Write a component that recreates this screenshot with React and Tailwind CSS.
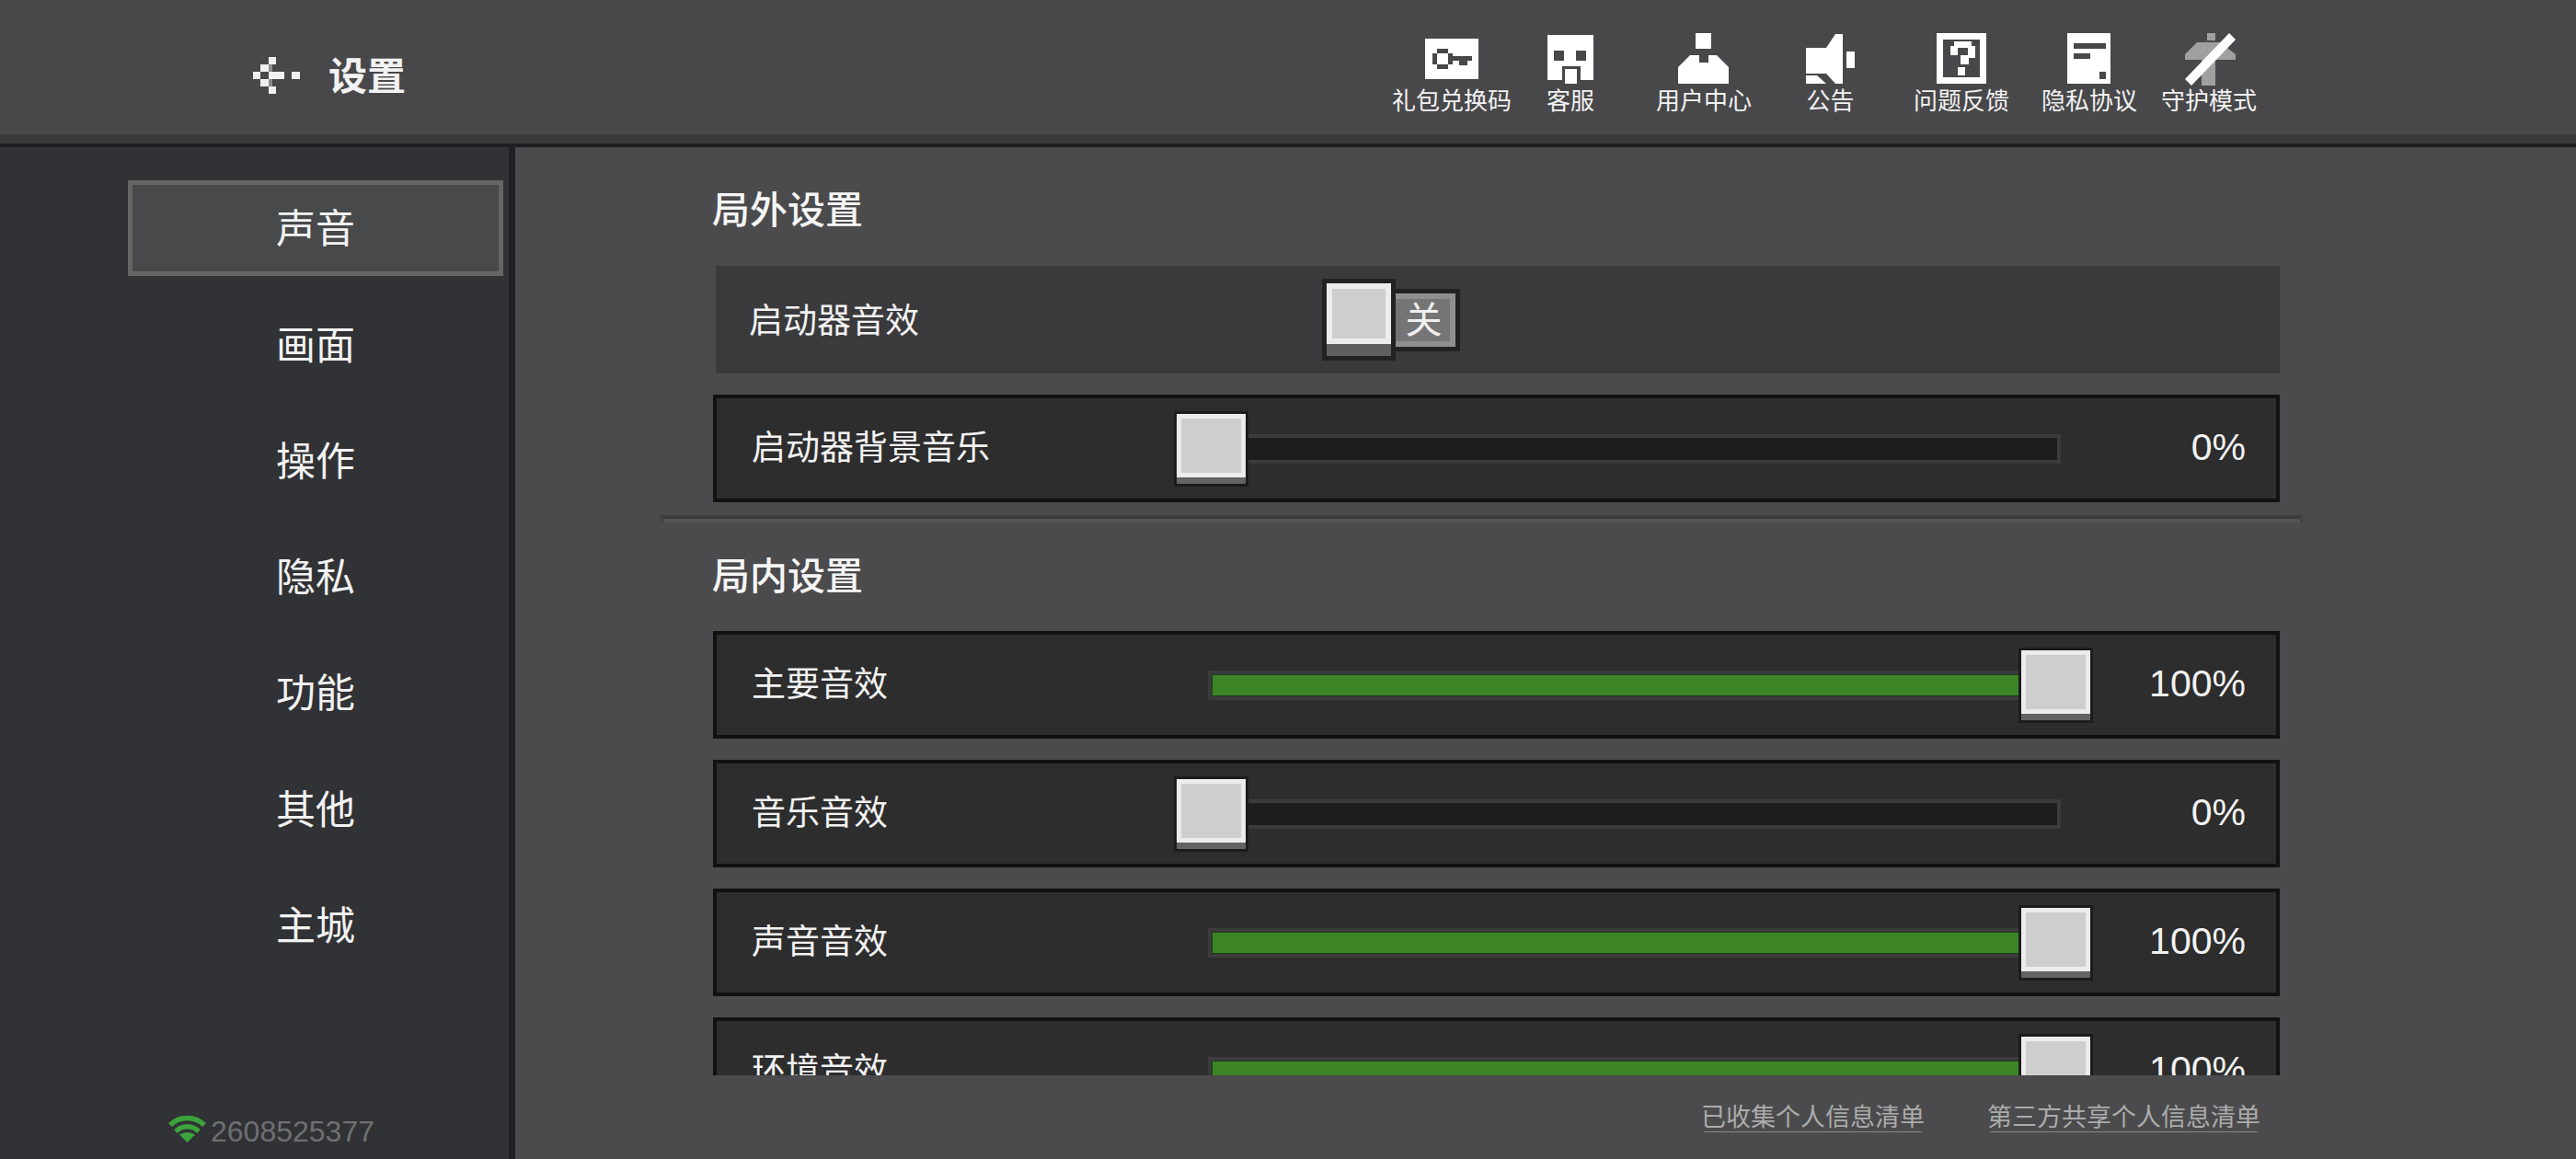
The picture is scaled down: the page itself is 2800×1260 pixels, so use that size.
const FONT = "font-['Liberation_Sans','Noto_Sans_CJK_SC',sans-serif]";

const KeyIcon = () => (
  <svg viewBox="0 0 58 55" className="w-[58px] h-[55px] shrink-0">
    <rect x="0" y="6" width="58" height="44" fill="#fff" />
    <path d="M13 17h12v5h5v3h21v5h-5v5h-9v-5h-7v4h-5v5H13v-5H8V22h5zM13 22v12h12V22z" fill="#48484a" fillRule="evenodd" />
  </svg>
);

const GhostIcon = () => (
  <svg viewBox="0 0 50 55" className="w-[50px] h-[55px] shrink-0">
    <rect x="0" y="2" width="50" height="49" fill="#fff" />
    <rect x="7" y="19" width="11" height="11" fill="#48484a" />
    <rect x="31" y="19" width="11" height="11" fill="#48484a" />
    <rect x="16" y="36" width="20" height="19" fill="#48484a" />
    <rect x="19" y="39" width="13" height="16" fill="#fff" />
  </svg>
);

const UserIcon = () => (
  <svg viewBox="0 0 55 55" className="w-[55px] h-[55px] shrink-0">
    <rect x="19" y="0" width="17" height="17" fill="#fff" />
    <path d="M13 24h10v8h10v-8h9l13 13v18H0V37z" fill="#fff" />
  </svg>
);

const SpeakerIcon = () => (
  <svg viewBox="0 0 53 55" className="w-[53px] h-[55px] shrink-0">
    <path d="M0 16h22L32 1h8v54h-8L22 44H0z" fill="#fff" />
    <path d="M0 46h12l10 9H0z" fill="#fff" />
    <rect x="44" y="20" width="9" height="18" fill="#fff" />
  </svg>
);

const QuestionIcon = () => (
  <svg viewBox="0 0 54 55" className="w-[54px] h-[55px] shrink-0">
    <rect x="0" y="0" width="54" height="55" fill="#fff" />
    <rect x="7" y="7" width="40" height="41" fill="#48484a" />
    <path d="M19 9h19v5h4v13h-7v7h-9v-10h8v-8H23v8h-8V14h4z" fill="#fff" />
    <rect x="23" y="37" width="8" height="9" fill="#fff" />
  </svg>
);

const DocIcon = () => (
  <svg viewBox="0 0 47 55" className="w-[47px] h-[55px] shrink-0">
    <rect x="0" y="0" width="47" height="55" fill="#fff" />
    <rect x="7" y="11" width="35" height="6" fill="#48484a" />
    <rect x="7" y="22" width="18" height="6" fill="#48484a" />
    <rect x="35" y="42" width="7" height="8" fill="#48484a" />
  </svg>
);

const GuardIcon = () => (
  <svg viewBox="0 0 55 57" className="w-[55px] h-[57px] ml-[4px] mb-[-2px] shrink-0">
    <g fill="#a0a0a0">
      <rect x="24" y="0" width="9" height="8" />
      <path d="M13 10h25l17 13v6H0v-6z" />
      <rect x="18" y="29" width="15" height="28" />
    </g>
    <path d="M48 0l7 7L7 57l-7-7z" fill="#fff" />
  </svg>
);

const BackIcon = () => (
  <svg viewBox="0 0 51 40" className="w-[51px] h-[40px] shrink-0">
    <g fill="#f0f0f0">
      <rect x="17" y="0" width="8" height="8" />
      <rect x="8" y="8" width="9" height="8" />
      <rect x="0" y="16" width="8" height="8" />
      <rect x="17" y="16" width="17" height="8" />
      <rect x="8" y="24" width="9" height="8" />
      <rect x="17" y="32" width="8" height="8" />
      <rect x="42" y="16" width="9" height="8" />
    </g>
    <g fill="#8a8a8a">
      <rect x="17" y="8" width="4" height="8" />
      <rect x="17" y="24" width="4" height="8" />
    </g>
  </svg>
);

const WifiIcon = () => (
  <svg viewBox="0 0 41 30" className="w-[41px] h-[30px] mb-[6px] shrink-0" fill="none" stroke="#3ca23c" strokeWidth="5.5">
    <path d="M2 11C12 1 29 1 39 11" />
    <path d="M8 18C15 11 26 11 33 18" />
    <path d="M12 21.5C17 18 24 18 29 21.5L20.5 30z" fill="#3ca23c" stroke="none" />
  </svg>
);

const navItems = [
  { label: "礼包兑换码", icon: KeyIcon, margin: "ml-0" },
  { label: "客服", icon: GhostIcon, margin: "ml-[38px]" },
  { label: "用户中心", icon: UserIcon, margin: "ml-[67px]" },
  { label: "公告", icon: SpeakerIcon, margin: "ml-[59px]" },
  { label: "问题反馈", icon: QuestionIcon, margin: "ml-[64px]" },
  { label: "隐私协议", icon: DocIcon, margin: "ml-[35px]" },
  { label: "守护模式", icon: GuardIcon, margin: "ml-[26px]" },
];

const menu = ["声音", "画面", "操作", "隐私", "功能", "其他", "主城"];

const Thumb = ({ className }) => (
  <div className={`absolute top-1/2 -translate-y-1/2 w-[81px] h-[82px] border-[3px] border-[#1c1c1c] flex flex-col ${className}`}>
    <div className="h-[69px] bg-[#cecece] border-[5px] border-[#ececec]" />
    <div className="h-[7px] bg-[#636365]" />
  </div>
);

const SliderRow = ({ label, value }) => (
  <div className="h-[117px] shrink-0 border-4 border-[#111112] bg-[#2d2d2d] flex items-center">
    <div className="w-[534px] pl-[38px] text-[37px] text-[#f2f2f2]">{label}</div>
    <div className="relative w-[927px] h-[32px] border-4 border-[#3b3b3b] bg-[#1d1d1d]">
      {value > 0 && <div className="h-full bg-[#3c8527] border border-[#1d3a14]" />}
      <Thumb className={value > 0 ? "right-[-39px]" : "left-[-41px]"} />
    </div>
    <div className="flex-1 pr-[33px] pb-[1px] text-right text-[41px] text-[#f2f2f2]">{value}%</div>
  </div>
);

const ToggleRow = ({ label }) => (
  <div className="h-[117px] shrink-0 ml-[3px] bg-[#3a3a3c] flex items-center">
    <div className="w-[659px] pl-[36px] pt-[4px] text-[37px] text-[#f2f2f2]">{label}</div>
    <div className="flex items-center">
      <div className="w-[80px] h-[89px] border-[5px] border-[#222] flex flex-col">
        <div className="h-[66px] bg-[#cecece] border-[6px] border-[#ececec]" />
        <div className="flex-1 bg-[#5f5f5f]" />
      </div>
      <div className="w-[70px] h-[68px] border-[5px] border-l-0 border-[#222]">
        <div className="h-full bg-[#757575] border-[6px] border-l-0 border-[#8f8f8f] pl-[2px] flex items-center justify-center text-[40px] leading-none text-[#f0f0f0]">
          关
        </div>
      </div>
    </div>
  </div>
);

const SectionTitle = ({ children, className }) => (
  <h2 className={`h-[60px] leading-[60px] ml-[-1px] text-[41px] font-medium text-[#f5f5f5] ${className}`}>{children}</h2>
);

const FooterLink = ({ children }) => (
  <span className="relative text-[27px] leading-[30px] text-[#ababab]">
    {children}
    <span className="absolute left-[3px] right-[3px] bottom-[-1px] h-px bg-[#8a8a8a]" />
  </span>
);

export default function App() {
  return (
    <div lang="zh-CN" className={`w-[2800px] h-[1260px] flex flex-col overflow-hidden bg-[#4b4b4d] ${FONT}`}>
      {/* top bar */}
      <header className="h-[160px] shrink-0 flex flex-col">
        <div className="h-[146px] bg-[#48484a] flex items-start pt-[36px] pl-[275px] pr-[347px]">
          <div className="flex items-center h-[92px]">
            <BackIcon />
            <span className="ml-[31px] pt-[3px] text-[42px] font-bold text-[#f2f2f2]">设置</span>
          </div>
          <nav className="ml-auto flex">
            {navItems.map(({ label, icon: Icon, margin }) => (
              <div key={label} className={`flex flex-col items-center ${margin}`}>
                <Icon />
                <span className="mt-[1px] text-[26px] leading-[36px] text-[#f2f2f2] whitespace-nowrap">{label}</span>
              </div>
            ))}
          </nav>
        </div>
        <div className="h-[10px] bg-[#3a3a3c]" />
        <div className="h-[4px] bg-[#1e1e20]" />
      </header>

      <div className="flex-1 min-h-0 flex">
        {/* sidebar */}
        <aside className="w-[560px] shrink-0 bg-[#313235] border-r-[7px] border-[#1f2025] flex flex-col pt-[36px] pb-[10px]">
          <ul className="ml-[139px] w-[408px] flex flex-col gap-[22.3px]">
            {menu.map((item, i) => (
              <li
                key={item}
                className={`h-[104px] pt-[3px] flex items-center justify-center text-[43px] text-[#f2f2f2] ${
                  i === 0 ? "bg-[#48494a] border-[5px] border-[#646665]" : ""
                }`}
              >
                {item}
              </li>
            ))}
          </ul>
          <div className="mt-auto ml-[183px] flex items-center gap-[5px]">
            <WifiIcon />
            <span className="text-[32px] leading-[40px] text-[#6f7072]">2608525377</span>
          </div>
        </aside>

        {/* content */}
        <main className="flex-1 min-w-0 flex flex-col">
          <div className="flex-1 min-h-0 overflow-hidden">
            <div className="pl-[215px] w-[1918px] flex flex-col">
              <SectionTitle className="mt-[39px]">局外设置</SectionTitle>
              <div className="mt-[30px] flex flex-col gap-[23px]">
                <ToggleRow label="启动器音效" />
                <SliderRow label="启动器背景音乐" value={0} />
              </div>
              <div className="mt-[14px] ml-[-57px] w-[1785px] h-[8px] flex flex-col border-x-[3px] border-[#414143]">
                <div className="h-[4px] bg-[#3c3c3e]" />
                <div className="h-[4px] bg-[#555557]" />
              </div>
              <SectionTitle className="mt-[29px]">局内设置</SectionTitle>
              <div className="mt-[29px] flex flex-col gap-[23px]">
                <SliderRow label="主要音效" value={100} />
                <SliderRow label="音乐音效" value={0} />
                <SliderRow label="声音音效" value={100} />
                <SliderRow label="环境音效" value={100} />
              </div>
            </div>
          </div>
          <footer className="h-[91px] shrink-0 flex items-start justify-end gap-[68px] pt-[31px] pr-[343px]">
            <FooterLink>已收集个人信息清单</FooterLink>
            <FooterLink>第三方共享个人信息清单</FooterLink>
          </footer>
        </main>
      </div>
    </div>
  );
}
